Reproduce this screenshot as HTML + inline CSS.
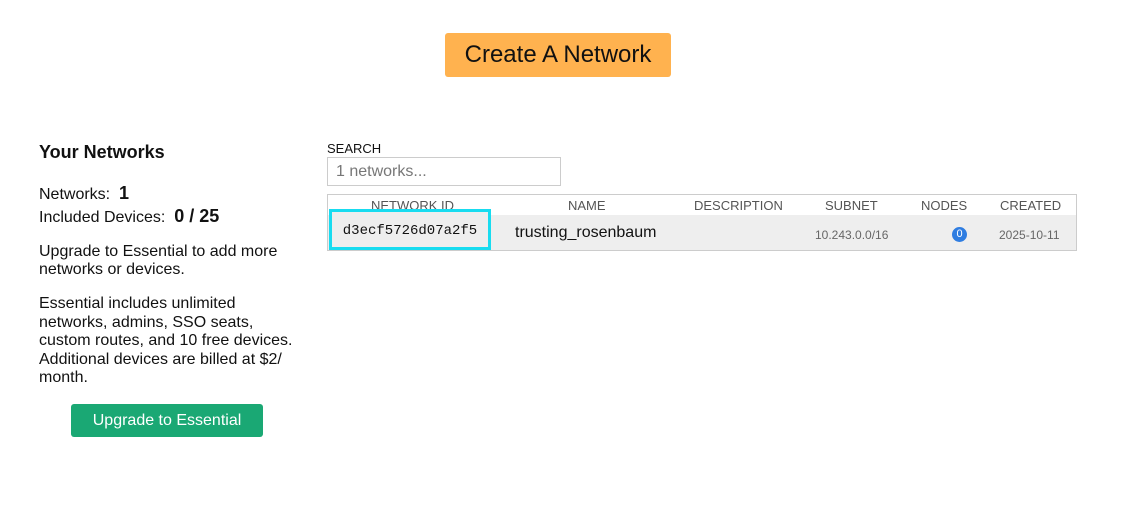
<html><head><style>
body{margin:0;width:1133px;height:518px;background:#fff;font-family:"Liberation Sans",sans-serif;color:#111;position:relative;overflow:hidden}
.a{position:absolute;white-space:nowrap}
</style></head><body>
<div class="a" style="left:445px;top:33px;width:226px;height:44px;background:#ffb24f;border-radius:3px;font-size:24px;line-height:44px;text-align:center;color:#111">Create A Network</div>
<div class="a" style="left:39px;top:142px;font-size:18px;font-weight:bold">Your Networks</div>
<div class="a" style="left:39px;top:183px;font-size:16px">Networks:&nbsp; <b style="font-size:18px">1</b></div>
<div class="a" style="left:39px;top:206px;font-size:16px">Included Devices:&nbsp; <b style="font-size:18px">0 / 25</b></div>
<div class="a" style="left:39px;top:243px;font-size:16px;line-height:18px">Upgrade to Essential to add more<br>networks or devices.</div>
<div class="a" style="left:39px;top:295px;font-size:16px;line-height:18.5px">Essential includes unlimited<br>networks, admins, SSO seats,<br>custom routes, and 10 free devices.<br>Additional devices are billed at $2/<br>month.</div>
<div class="a" style="left:71px;top:404px;width:192px;height:33px;background:#1aa874;border-radius:3px;color:#fff;font-size:16px;line-height:33px;text-align:center">Upgrade to Essential</div>
<div class="a" style="left:327px;top:141px;font-size:13px">SEARCH</div>
<div class="a" style="left:327px;top:157px;border:1px solid #ccc;font-size:16px;line-height:27px;color:#777;padding-left:8px;box-sizing:border-box;width:234px;height:29px">1 networks...</div>
<div class="a" style="left:327px;top:194px;width:748px;height:55px;border:1px solid #ccc"></div>
<div class="a" style="left:328px;top:215px;width:748px;height:35px;background:#eee"></div>
<div class="a" style="top:198px;left:0;font-size:13px;color:#555;width:1133px;height:16px">
<span class="a" style="left:371px">NETWORK ID</span><span class="a" style="left:568px">NAME</span><span class="a" style="left:694px">DESCRIPTION</span><span class="a" style="left:825px">SUBNET</span><span class="a" style="left:921px">NODES</span><span class="a" style="left:1000px">CREATED</span></div>
<div class="a" style="left:329px;top:209px;width:162px;height:41px;border:3px solid #18dcf0;box-sizing:border-box;background:#eee;font-family:'Liberation Mono',monospace;font-size:14px;line-height:38px;text-align:center;color:#111">d3ecf5726d07a2f5</div>
<div class="a" style="left:515px;top:224px;font-size:16px">trusting_rosenbaum</div>
<div class="a" style="left:815px;top:228px;font-size:12px;color:#666">10.243.0.0/16</div>
<div class="a" style="left:952px;top:227px;width:15px;height:15px;border-radius:50%;background:#2f7de1;color:#fff;font-size:11px;line-height:15px;text-align:center">0</div>
<div class="a" style="left:999px;top:228px;font-size:12px;color:#666">2025-10-11</div>
</body></html>
